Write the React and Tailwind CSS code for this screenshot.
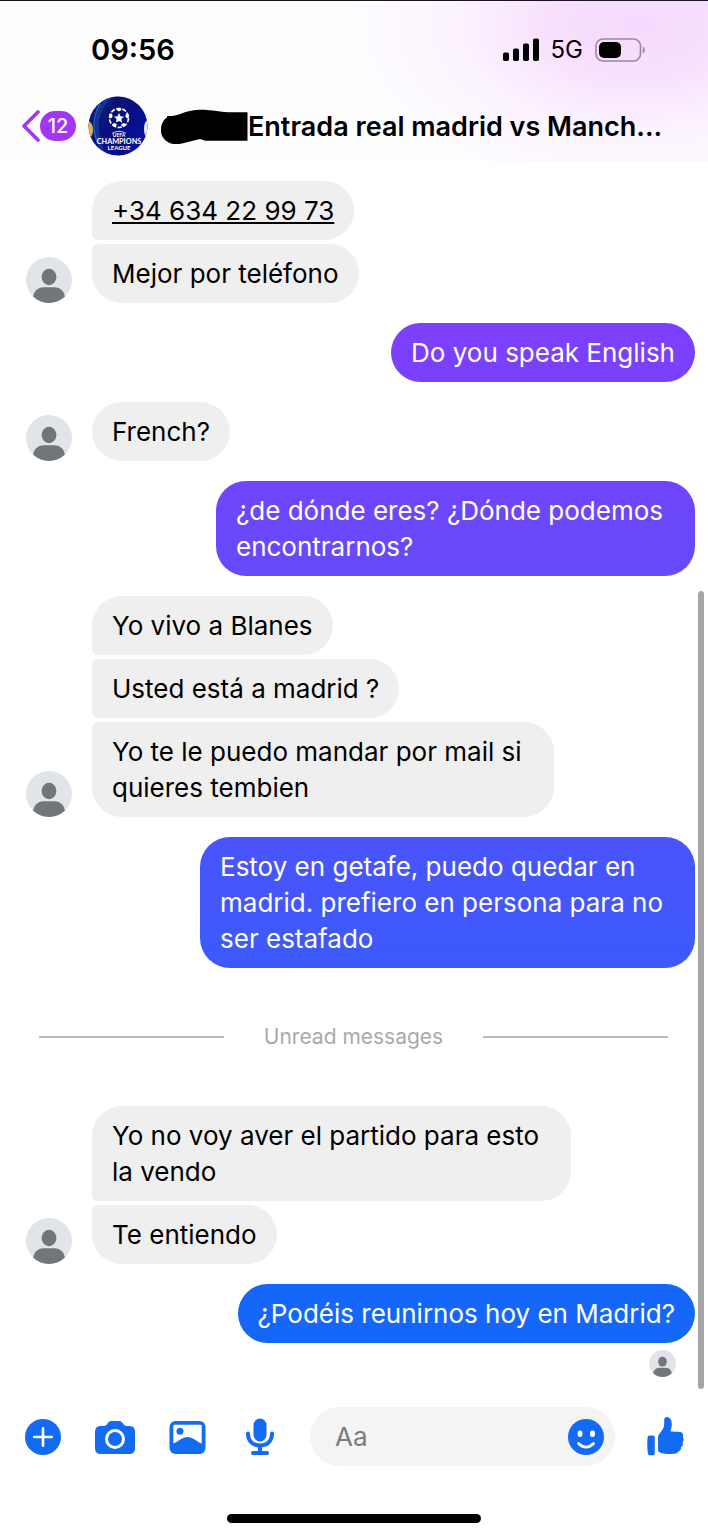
import React from "react";

const FONT = "font-['Inter','Liberation_Sans',sans-serif]";

const CORNERS = {
  single: "rounded-[30px]",
  first: "rounded-[30px] rounded-bl-[6px]",
  middle: "rounded-[30px] rounded-l-[6px]",
  last: "rounded-[30px] rounded-tl-[6px]",
};

// Wrapped messages keep a little more room on the trailing side.
const trailingPad = (text) => (text.includes("\n") ? "pr-8" : "pr-5");

function Person({ className }) {
  return (
    <svg viewBox="0 0 46 46" className={className} role="img" aria-label="Contact">
      <defs>
        <clipPath id="person-clip">
          <circle cx="23" cy="23" r="23" />
        </clipPath>
      </defs>
      <g clipPath="url(#person-clip)">
        <rect width="46" height="46" fill="#e1e4e9" />
        <ellipse cx="23" cy="20" rx="7.4" ry="8.3" fill="#727679" />
        <path d="M7 42c0-7 4-11.800 11-11.800h10c7 0 11 4.800 11 11.800v4H7z" fill="#727679" />
      </g>
    </svg>
  );
}

function Incoming({ messages }) {
  return (
    <div className="flex items-end gap-5">
      <Person className="size-[46px] shrink-0" />
      <div className="flex flex-col items-start gap-1">
        {messages.map((m, i) => {
          const pos =
            messages.length === 1 ? "single" : i === 0 ? "first" : i === messages.length - 1 ? "last" : "middle";
          return (
            <div key={m.text} className={`bg-[#efefef] pt-3 pb-[11px] pl-5 whitespace-pre-line text-black ${trailingPad(m.text)} ${CORNERS[pos]}`}>
              {m.tel ? (
                <a href={m.tel} className="underline decoration-2 underline-offset-2">{m.text}</a>
              ) : (
                m.text
              )}
            </div>
          );
        })}
      </div>
    </div>
  );
}

function Outgoing({ text, tint }) {
  return (
    <div className={`mr-[13px] self-end rounded-[30px] pt-3 pb-[11px] pl-5 whitespace-pre-line text-white ${trailingPad(text)} ${tint}`}>
      {text}
    </div>
  );
}

function GroupPhoto() {
  return (
    <svg viewBox="0 0 60 60" className="size-[60px] shrink-0" role="img" aria-label="UEFA Champions League">
      <defs>
        <clipPath id="photo-clip">
          <circle cx="30" cy="30" r="29.500" />
        </clipPath>
        <linearGradient id="photo-blue" x1="0" y1="0" x2="1" y2="1">
          <stop offset="0" stopColor="#102470" />
          <stop offset="0.45" stopColor="#0a0f80" />
          <stop offset="1" stopColor="#0712ae" />
        </linearGradient>
      </defs>
      <g clipPath="url(#photo-clip)">
        <rect width="60" height="60" fill="url(#photo-blue)" />
        <path d="M22 0C8 14 4 30 16 60" fill="none" stroke="#1c4fa8" strokeWidth="4" opacity="0.5" />
        <path d="M12 8C5 20 4 34 10 48" fill="none" stroke="#2f7fd0" strokeWidth="1.200" opacity="0.8" />
        <path d="M30 0C22 20 26 40 34 60" fill="none" stroke="#050a50" strokeWidth="7" opacity="0.4" />
        <path d="M0 25c4 1 5 6 5 9s-1 7-4 8H0z" fill="#e2ae55" />
        <path d="M60 24c-3 1-4 5-4 9s1 8 4 9z" fill="#dfe6f2" />
      </g>
      <circle cx="31" cy="22" r="9.500" fill="none" stroke="#fff" strokeWidth="1.600" strokeDasharray="4.400 1.570" />
      <path d="M31 17l1.500 3.300 3.500.4-2.600 2.400.7 3.500-3.100-1.700-3.100 1.700.7-3.500-2.600-2.400 3.500-.4z" fill="#fff" />
      <g fill="#fff">
        <path d="M29.200 12h3.600l.6 1.900-2.400 1.500-2.400-1.500zM38.200 17.500l2 .5.600 3.600-1.800.8-1.700-1.900zM23.800 17.500l-2 .5-.6 3.600 1.800.8 1.700-1.900zM36.200 27l1.500 1.500-2.200 2.300-2.300-1 .5-2zM25.800 27l-1.500 1.500 2.200 2.300 2.300-1-.5-2z" />
      </g>
      <g fill="#fff" textAnchor="middle" fontFamily="Lato, sans-serif" fontWeight="700">
        <path d="M24 37.500c3.500-2.800 10.500-2.800 14 0" fill="none" stroke="#fff" strokeWidth="0.800" />
        <text x="31" y="41" fontSize="5">UEFA</text>
        <text x="31" y="47.500" fontSize="7.300">CHAMPIONS</text>
        <text x="31" y="53.500" fontSize="6">LEAGUE</text>
      </g>
    </svg>
  );
}

function StatusBar() {
  return (
    <div className="flex h-[94px] items-center justify-between border-t border-[#1b1420] pr-[62px] pl-[91px] pt-1">
      <time className="text-[29px] font-semibold">09:56</time>
      <div className="flex items-center gap-3">
        <svg viewBox="0 0 36 24" className="h-6 w-9" role="img" aria-label="Signal">
          <rect x="0" y="14.500" width="6" height="8.500" rx="1.800" />
          <rect x="10" y="10.500" width="6" height="12.500" rx="1.800" />
          <rect x="20" y="5.500" width="6" height="17.500" rx="1.800" />
          <rect x="30" y="0.500" width="6" height="22.500" rx="1.800" />
        </svg>
        <span className="text-[24px]">5G</span>
        <svg viewBox="0 0 51 24" className="h-6 w-[51px]" role="img" aria-label="Battery">
          <rect x="1" y="1" width="44.500" height="22" rx="7" fill="none" stroke="#9b86a3" strokeWidth="1.600" />
          <rect x="4" y="4" width="22" height="16" rx="5" />
          <path d="M47.800 8.500c2.600.6 2.600 6.400 0 7z" fill="#9b86a3" />
        </svg>
      </div>
    </div>
  );
}

function TitleBar() {
  return (
    <div className="flex h-[68px] items-start pr-9 pl-[22px]">
      <button type="button" aria-label="Back, 12 unread" className="mt-4 flex h-8 shrink-0 items-center text-[#a335f5]">
        <svg viewBox="0 0 18 32" className="h-8 w-[18px]" fill="none" stroke="currentColor" strokeWidth="3.600" strokeLinecap="round" strokeLinejoin="round">
          <path d="M16 2L2 16l14 14" />
        </svg>
        <span className="flex h-[30px] w-9 items-center justify-center rounded-full bg-[#a335f5] text-[20px] font-medium text-white">12</span>
      </button>
      <div className="ml-3 mt-[2px] flex shrink-0">
        <GroupPhoto />
      </div>
      <svg viewBox="0 0 88 38" className="ml-3 mt-3 h-[38px] w-[88px] shrink-0" aria-hidden="true">
        <path d="M87.500 6.300V34.800H46c-3-.2-4-2.200-8-1.200L22 37.500C9 40.500 1 33 1 24.500 1 17 4 13.500 7 11.500V10h5C20 9 27 3.800 40 3.700c13-.1 20 2.800 35 2.600z" />
      </svg>
      <h1 className="mt-[15px] min-w-0 truncate text-[27px] leading-9 font-semibold">Entrada real madrid vs Manch...</h1>
    </div>
  );
}

function Composer() {
  return (
    <form className="flex items-center pr-6 pl-[25px] text-[#146bf3]" onSubmit={(e) => e.preventDefault()}>
      <div className="flex shrink-0 items-center">
        <button type="button" aria-label="More actions" className="mr-[34px]">
          <svg viewBox="0 0 36 36" className="size-9">
            <circle cx="18" cy="18" r="18" fill="currentColor" />
            <path d="M18 9.200v17.600M9.200 18h17.600" stroke="#fff" strokeWidth="2.600" strokeLinecap="round" />
          </svg>
        </button>
        <button type="button" aria-label="Camera" className="mr-[34px]">
          <svg viewBox="0 0 40 36" className="h-9 w-10">
            <path d="M6 7h2.500c2 0 2.800-.8 4-2.500C13.800 2.500 15 2 17 2h6.500c2 0 3.200.5 4.500 2.500C29.200 6.200 30 7 32 7h2c4 0 6 2 6 6v16c0 4-2 6-6 6H6c-4 0-6-2-6-6V13c0-4 2-6 6-6z" fill="currentColor" />
            <circle cx="20" cy="20" r="8.500" fill="none" stroke="#fff" strokeWidth="3" />
          </svg>
        </button>
        <button type="button" aria-label="Gallery" className="mr-10">
          <svg viewBox="0 0 37 36" className="h-9 w-[37px]">
            <rect x="0.500" y="2" width="36" height="33" rx="6" fill="currentColor" />
            <path d="M5.500 5.800h26a1.200 1.200 0 0 1 1.200 1.200V24.500c-5.200-2-9-6.500-14.200-6.500S9.500 22.500 4.300 24.500V7a1.200 1.200 0 0 1 1.200-1.200z" fill="#fff" />
            <circle cx="11" cy="12.300" r="3.500" fill="currentColor" />
          </svg>
        </button>
        <button type="button" aria-label="Voice clip" className="mr-9">
          <svg viewBox="0 0 28 37" className="h-[37px] w-7">
            <rect x="7.500" y="0.500" width="13" height="23" rx="6.500" fill="currentColor" />
            <path d="M2 15.500c0 7.500 5 12 12 12s12-4.500 12-12M14 28v6M7 35h14" fill="none" stroke="currentColor" strokeWidth="4" strokeLinecap="round" />
          </svg>
        </button>
      </div>
      <div className="flex h-[59px] min-w-0 flex-1 items-center rounded-full bg-[#f4f4f4] pr-[11px] pl-[25px]">
        <input aria-label="Message" placeholder="Aa" className="min-w-0 flex-1 bg-transparent text-[26px] text-black outline-none placeholder:text-[#7b7b7b]" />
        <button type="button" aria-label="Emoji" className="shrink-0">
          <svg viewBox="0 0 36 36" className="size-9">
            <circle cx="18" cy="18" r="18" fill="currentColor" />
            <ellipse cx="12" cy="14.800" rx="2.500" ry="3.300" fill="#fff" />
            <ellipse cx="24.500" cy="14.800" rx="2.500" ry="3.300" fill="#fff" />
            <path d="M10.500 24.500c4.500 4.700 10.500 4.700 15 0" fill="none" stroke="#fff" strokeWidth="2.800" strokeLinecap="round" />
          </svg>
        </button>
      </div>
      <button type="button" aria-label="Like" className="ml-8 shrink-0">
        <svg viewBox="0 0 37 39" className="h-[39px] w-[37px]" fill="currentColor">
          <path d="M2.500 18.500h3.300c1.400 0 2 .7 2 2V36c0 1.500-.7 2.300-2 2.300H3c-1.200 0-1.900-.6-2.100-2C.1 31 .1 26 .6 20.500c.1-1.300.8-2 1.900-2z" />
          <path d="M11 20.500c0-2 .6-3 2-4.600 2.500-3 4.200-5 4.200-9.200V3c0-2 1-3 2.600-3 3.200 0 5 3 5 7 0 3-.8 5-1.300 7.500 0 0 8 .2 10 .6 2.500.6 3.300 2.800 2.300 4.900 1.200 1.500 1.200 3.800-.2 5.200.8 1.800.2 3.800-1.500 4.800.3 2-.6 3.500-2.300 4.300C30.500 36.500 28 37 24 37c-4.500 0-8-.3-11-1.500-1.500-.7-2-1.700-2-3.500z" />
        </svg>
      </button>
    </form>
  );
}

export default function App() {
  return (
    <div className={`flex min-h-screen flex-col bg-white text-black ${FONT}`}>
      <header className="bg-[#fdfdfe] bg-[radial-gradient(ellipse_290px_170px_at_90%_15%,#f6dafd_0%,#f7dffd_28%,rgba(251,240,255,0.8)_62%,rgba(255,255,255,0)_100%)]">
        <StatusBar />
        <TitleBar />
      </header>

      <main className="relative pt-[19px] pl-[26px] text-[26px] leading-9">
        <div className="flex flex-col gap-5">
          <Incoming messages={[{ text: "+34 634 22 99 73", tel: "tel:+34634229973" }, { text: "Mejor por teléfono" }]} />
          <Outgoing text="Do you speak English" tint="bg-linear-to-b from-[#7d3ffe] to-[#7941fd]" />
          <Incoming messages={[{ text: "French?" }]} />
          <Outgoing text={"¿de dónde eres? ¿Dónde podemos\nencontrarnos?"} tint="bg-linear-to-b from-[#6f45fc] to-[#664afb]" />
          <Incoming
            messages={[
              { text: "Yo vivo a Blanes" },
              { text: "Usted está a madrid ?" },
              { text: "Yo te le puedo mandar por mail si\nquieres tembien" },
            ]}
          />
          <Outgoing
            text={"Estoy en getafe, puedo quedar en\nmadrid. prefiero en persona para no\nser estafado"}
            tint="bg-linear-to-b from-[#4a54fb] to-[#3b5afb]"
          />
        </div>
        <div className="my-[54px] mr-10 ml-[13px] flex h-[30px] items-center gap-10 text-[21px] text-[#a9a9a9]">
          <span className="h-[2px] flex-1 bg-[#b9b9b9]" />
          <span>Unread messages</span>
          <span className="h-[2px] flex-1 bg-[#b9b9b9]" />
        </div>
        <div className="flex flex-col gap-5">
          <Incoming messages={[{ text: "Yo no voy aver el partido para esto\nla vendo" }, { text: "Te entiendo" }]} />
          <Outgoing text="¿Podéis reunirnos hoy en Madrid?" tint="bg-[#1567fa]" />
        </div>
        <div className="mt-[7px] mr-8 flex justify-end">
          <Person className="size-[27px]" />
        </div>
        <div className="absolute top-[429px] right-1 -bottom-3 w-[6px] rounded-full bg-[#a6a6a6]" aria-hidden="true" />
      </main>

      <footer className="mt-[30px]">
        <Composer />
        <div className="mx-auto mt-12 mb-3 h-[9px] w-[254px] rounded-full bg-black" />
      </footer>
    </div>
  );
}
